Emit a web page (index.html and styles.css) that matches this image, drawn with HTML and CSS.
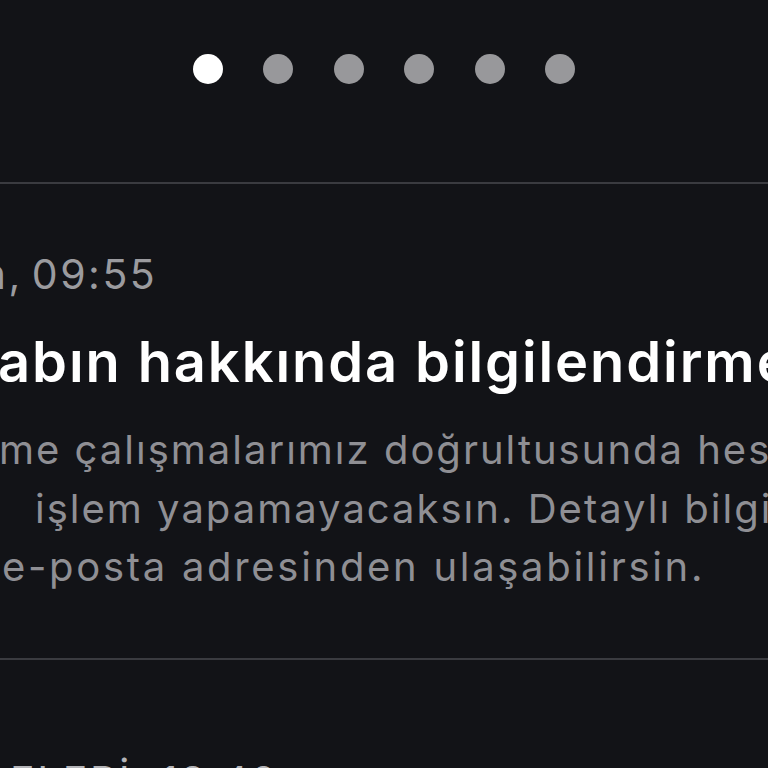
FILE: index.html
```html
<!DOCTYPE html>
<html lang="tr">
<head>
<meta charset="utf-8">
<title>Bildirimler</title>
<link rel="stylesheet" href="styles.css">
</head>
<body>
<div class="screen">
  <div class="pager">
    <span class="dot dot-active"></span>
    <span class="dot"></span>
    <span class="dot"></span>
    <span class="dot"></span>
    <span class="dot"></span>
    <span class="dot"></span>
  </div>
  <section class="notice">
    <p class="stamp">ün, 09:55</p>
    <h2 class="title">abın hakkında bilgilendirmesi</h2>
    <p class="body">
      <span class="line line-1">me çalışmalarımız doğrultusunda hesabında</span>
      <span class="line line-2">işlem yapamayacaksın. Detaylı bilgi için</span>
      <span class="line line-3">e-posta adresinden ulaşabilirsin.</span>
    </p>
  </section>
  <section class="notice notice-next">
    <p class="stamp stamp-next">ELERİ, 18:42</p>
  </section>
</div>
</body>
</html>
```
FILE: styles.css
```css
html, body {
  margin: 0;
  padding: 0;
  background: #121317;
}
body {
  width: 768px;
  height: 768px;
  overflow: hidden;
  font-family: Inter, "Noto Sans", sans-serif;
}
.screen {
  display: flex;
  flex-direction: column;
  height: 768px;
  overflow: hidden;
}
.pager {
  display: flex;
  justify-content: center;
  gap: 40.5px;
  height: 182px;
  flex-shrink: 0;
  padding-top: 54px;
  box-sizing: border-box;
}
.dot {
  width: 30px;
  height: 30px;
  border-radius: 50%;
  background: #98989b;
}
.dot-active {
  background: #ffffff;
}
.notice {
  border-top: 2px solid #3a3b40;
  height: 474px;
  flex-shrink: 0;
  overflow: hidden;
  white-space: nowrap;
}
.stamp {
  margin: 65px 0 0 -45px;
  font-size: 41px;
  line-height: 50px;
  color: #9b9b9f;
  letter-spacing: 2.5px;
  word-spacing: -5px;
}
.title {
  margin: 31px 0 0 -2px;
  font-size: 56px;
  line-height: 64px;
  font-weight: 600;
  color: #ffffff;
  letter-spacing: 1.9px;
}
.body {
  margin: 27px 0 0 0;
  font-size: 40px;
  line-height: 58.5px;
  color: #8f8f94;
  letter-spacing: 2px;
}
.line {
  display: block;
}
.line-1 { margin-left: -1px; }
.line-2 { margin-left: 35px; }
.line-3 { margin-left: 2px; letter-spacing: 2.7px; }
.notice-next {
  height: auto;
}
.stamp-next {
  margin: 96px 0 0 10px;
  color: #b4b4b8;
  word-spacing: normal;
}
```
